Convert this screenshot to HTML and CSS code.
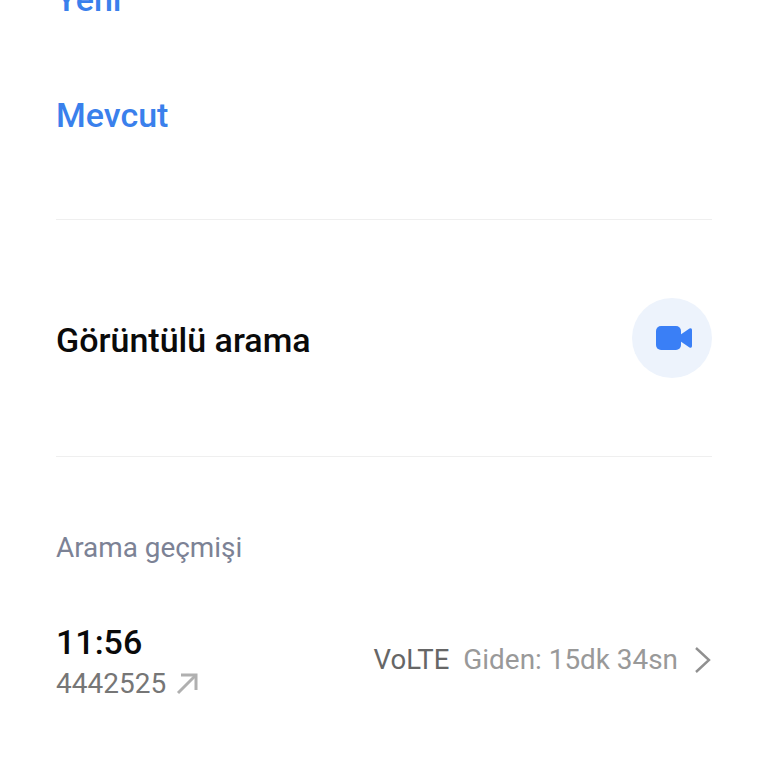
FILE: index.html
```html
<!DOCTYPE html>
<html lang="tr">
<head>
    <meta charset="UTF-8">
    <meta name="viewport" content="width=device-width, initial-scale=1.0">
    <title>Arama geçmişi</title>
    <link rel="stylesheet" href="styles.css">
</head>
<body>
    <div class="page">
        <section class="contact-actions">
            <div class="action-link">Yeni</div>
            <div class="action-link">Mevcut</div>
        </section>

        <section class="video-row">
            <span class="video-label">Görüntülü arama</span>
            <span class="video-button">
                <svg class="video-icon" width="36" height="24" viewBox="0 0 36 24">
                    <rect x="0" y="0" width="25" height="24" rx="5" fill="#3a7ff6"/>
                    <path d="M24 9 L33.5 2.5 Q36 1.5 36 4 V20 Q36 22.5 33.5 21.5 L24 15 Z" fill="#3a7ff6"/>
                </svg>
            </span>
        </section>

        <section class="history">
            <h2 class="history-title">Arama geçmişi</h2>
            <div class="call-row">
                <div class="call-info">
                    <div class="call-time">11:56</div>
                    <div class="call-number">
                        4442525
                        <svg width="22" height="22" viewBox="0 0 22 22" fill="none" stroke="#b0b0b0" stroke-width="3">
                            <path d="M2 20 L20 2"/>
                            <path d="M5 2 H20 V17"/>
                        </svg>
                    </div>
                </div>
                <div class="call-meta">
                    <span class="call-type">VoLTE</span>
                    <span class="call-duration">Giden: 15dk 34sn</span>
                    <svg class="chevron" width="18" height="28" viewBox="0 0 18 28" fill="none" stroke="#909090" stroke-width="2.4">
                        <path d="M2 2 L15 14 L2 26"/>
                    </svg>
                </div>
            </div>
        </section>
    </div>
</body>
</html>
```

FILE: styles.css
```css
html, body {
    height: 100%;
    margin: 0;
    background-color: #fff;
    overflow: hidden;
}
body {
    font-family: Roboto, "Noto Sans", Arial, sans-serif;
}
.page {
    margin-top: -21px;
    padding: 0 56px;
}
.contact-actions {
    display: flex;
    flex-direction: column;
    gap: 76px;
    padding-bottom: 84px;
    border-bottom: 1px solid #efefef;
}
.action-link {
    font-size: 34px;
    line-height: 40px;
    font-weight: 500;
    color: #3a80ec;
}
.video-row {
    display: flex;
    justify-content: space-between;
    align-items: center;
    height: 236px;
    border-bottom: 1px solid #efefef;
}
.video-label {
    padding-top: 4px;
    font-size: 34px;
    font-weight: 500;
    color: #0a0a0a;
}
.video-button {
    display: flex;
    justify-content: center;
    align-items: center;
    width: 80px;
    height: 80px;
    border-radius: 50%;
    background-color: #edf3fc;
}
.video-icon {
    margin-left: 4px;
}
.history {
    padding-top: 72px;
}
.history-title {
    margin: 0;
    font-size: 27.9px;
    line-height: 38px;
    font-weight: 400;
    color: #7c8295;
}
.call-row {
    display: flex;
    justify-content: space-between;
    align-items: center;
    margin-top: 54px;
}
.call-time {
    font-size: 34px;
    line-height: 42px;
    font-weight: 500;
    color: #0a0a0a;
}
.call-number {
    display: flex;
    align-items: center;
    gap: 10px;
    margin-top: 1px;
    font-size: 28px;
    line-height: 40px;
    color: #767676;
}
.call-meta {
    display: flex;
    align-items: center;
    padding-bottom: 6px;
    font-size: 27.9px;
}
.call-type {
    font-size: 27.5px;
    color: #666;
}
.call-duration {
    margin-left: 14px;
    color: #999;
}
.chevron {
    margin-left: 16px;
}
```
